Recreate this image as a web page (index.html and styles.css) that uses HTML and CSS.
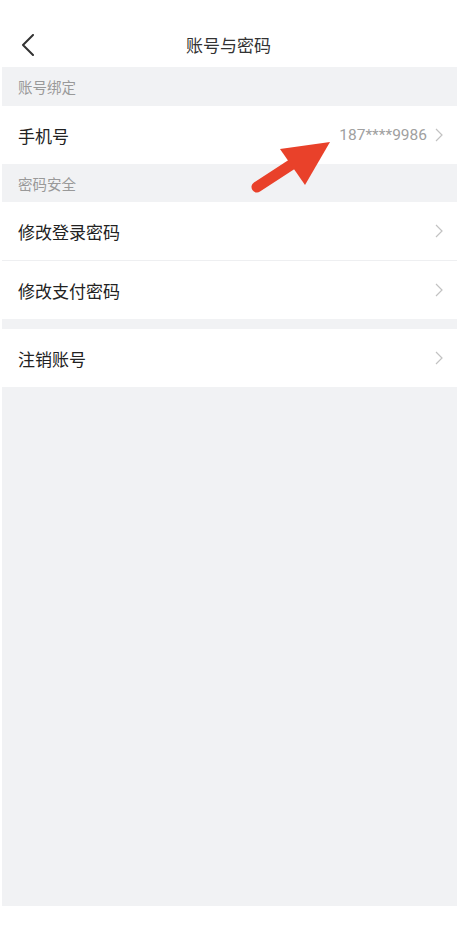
FILE: index.html
```html
<!DOCTYPE html>
<html lang="zh-CN">
<head>
    <meta charset="UTF-8">
    <meta name="viewport" content="width=device-width, initial-scale=1.0">
    <title>账号与密码</title>
    <link rel="stylesheet" href="styles.css">
</head>
<body>
    <div class="page">
        <div class="header">
            <span class="back">
                <svg width="14" height="22" viewBox="0 0 14 22"><polyline points="12,1 2,11 12,21" fill="none" stroke="#333" stroke-width="2" stroke-linecap="round" stroke-linejoin="round"/></svg>
            </span>
            <h1>账号与密码</h1>
        </div>

        <div class="content">
            <div class="section-title">账号绑定</div>
            <div class="row">
                <span class="label">手机号</span>
                <span class="extra">187****9986
                    <svg class="arrow" width="8" height="14" viewBox="0 0 8 14"><polyline points="1,1 7,7 1,13" fill="none" stroke="#c2c2c2" stroke-width="1.2"/></svg>
                </span>
            </div>

            <div class="section-title">密码安全</div>
            <div class="row line">
                <span class="label">修改登录密码</span>
                <svg class="arrow" width="8" height="14" viewBox="0 0 8 14"><polyline points="1,1 7,7 1,13" fill="none" stroke="#c2c2c2" stroke-width="1.2"/></svg>
            </div>
            <div class="row">
                <span class="label">修改支付密码</span>
                <svg class="arrow" width="8" height="14" viewBox="0 0 8 14"><polyline points="1,1 7,7 1,13" fill="none" stroke="#c2c2c2" stroke-width="1.2"/></svg>
            </div>

            <div class="gap"></div>
            <div class="row">
                <span class="label">注销账号</span>
                <svg class="arrow" width="8" height="14" viewBox="0 0 8 14"><polyline points="1,1 7,7 1,13" fill="none" stroke="#c2c2c2" stroke-width="1.2"/></svg>
            </div>
        </div>

        <!-- annotation arrow pointing at the phone number -->
        <svg class="pointer" width="95" height="65" viewBox="0 0 95 65">
            <line x1="12" y1="52" x2="55" y2="24" stroke="#e9412a" stroke-width="11" stroke-linecap="round"/>
            <polygon points="85,7 35,14 60,50" fill="#e9412a"/>
        </svg>
    </div>
</body>
</html>
```

FILE: styles.css
```css
body {
    margin: 0;
    background: #fff;
    font-family: "Noto Sans CJK SC", "Noto Sans", sans-serif;
}

.page {
    position: relative;
    width: 457px;
    height: 927px;
}

.header {
    height: 45px;
    padding-top: 22px;
    display: flex;
    align-items: center;
    justify-content: center;
    position: relative;
}

.header h1 {
    margin: 0;
    font-size: 17px;
    font-weight: 400;
    color: #333;
}

.back {
    position: absolute;
    left: 21px;
    top: 34px;
    display: flex;
}

.content {
    margin-left: 2px;
    height: 839px;
    background: #f1f2f4;
}

.section-title {
    height: 38px;
    padding-left: 16px;
    display: flex;
    align-items: center;
    font-size: 14.5px;
    color: #999;
}

.section-title:first-child {
    height: 39px;
}

.row {
    height: 58px;
    padding: 0 14px 0 16px;
    background: #fff;
    display: flex;
    align-items: center;
    justify-content: space-between;
}

.row.line {
    border-bottom: 1px solid #eeeff1;
}

.label {
    font-size: 17px;
    color: #222;
}

.extra {
    display: flex;
    align-items: center;
    gap: 8px;
    font-family: Roboto, "Noto Sans", sans-serif;
    font-size: 15.5px;
    color: #a0a0a0;
}

.gap {
    height: 10px;
}

.pointer {
    position: absolute;
    left: 245px;
    top: 135px;
}
```
